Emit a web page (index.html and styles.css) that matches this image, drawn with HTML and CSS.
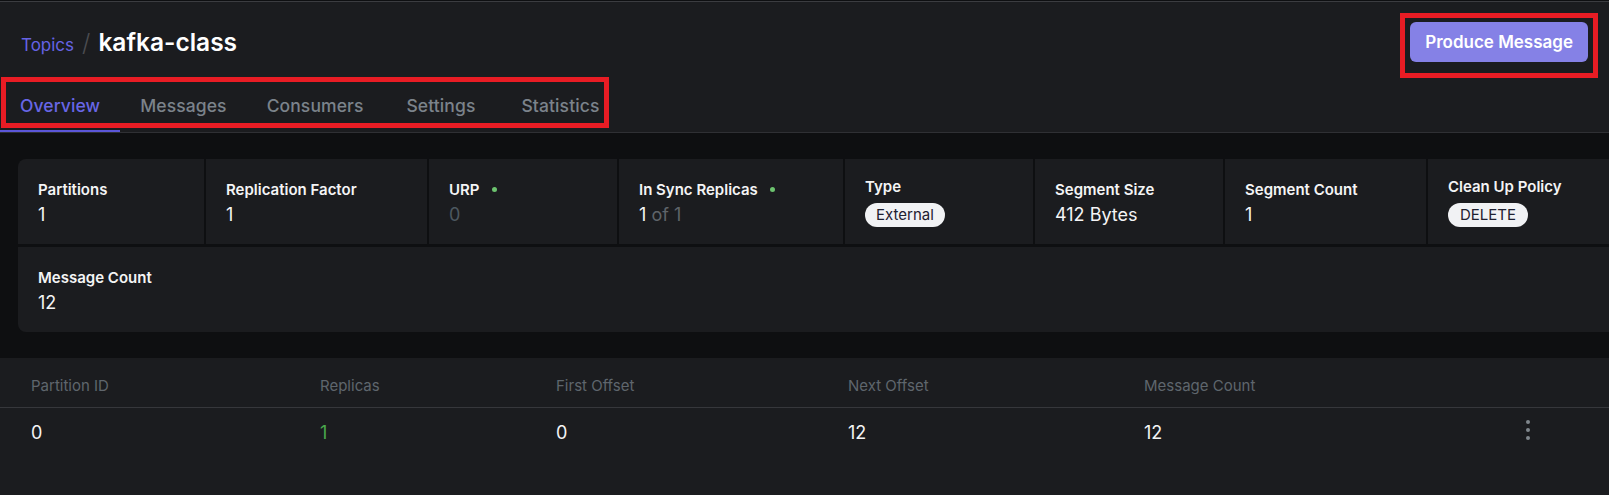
FILE: index.html
```html
<!DOCTYPE html>
<html lang="en">
<head>
<meta charset="utf-8">
<title>kafka-class · Topics</title>
<link rel="stylesheet" href="styles.css">
</head>
<body>
<div class="page">
  <header class="topbar">
    <div class="title-row">
      <nav class="crumbs">
        <a class="crumb-link">Topics</a>
        <span class="crumb-sep">/</span>
        <h1 class="crumb-title">kafka-class</h1>
      </nav>
      <button class="btn-primary">Produce Message</button>
    </div>
    <nav class="tabs">
      <a class="tab tab-active">Overview</a>
      <a class="tab">Messages</a>
      <a class="tab">Consumers</a>
      <a class="tab tab-settings">Settings</a>
      <a class="tab tab-statistics">Statistics</a>
    </nav>
  </header>

  <main class="content">
    <section class="stats">
      <div class="stats-row">
        <div class="stat w-partitions first">
          <div class="stat-label">Partitions</div>
          <div class="stat-value">1</div>
        </div>
        <div class="stat w-replication">
          <div class="stat-label">Replication Factor</div>
          <div class="stat-value">1</div>
        </div>
        <div class="stat w-urp">
          <div class="stat-label">URP <span class="dot"></span></div>
          <div class="stat-value muted">0</div>
        </div>
        <div class="stat w-isr">
          <div class="stat-label">In Sync Replicas <span class="dot"></span></div>
          <div class="stat-value">1 <span class="of">of 1</span></div>
        </div>
        <div class="stat stat-badge w-type">
          <div class="stat-label">Type</div>
          <span class="badge">External</span>
        </div>
        <div class="stat w-segsize">
          <div class="stat-label">Segment Size</div>
          <div class="stat-value">412 Bytes</div>
        </div>
        <div class="stat w-segcount">
          <div class="stat-label">Segment Count</div>
          <div class="stat-value">1</div>
        </div>
        <div class="stat stat-badge w-policy">
          <div class="stat-label">Clean Up Policy</div>
          <span class="badge badge-caps">DELETE</span>
        </div>
      </div>
      <div class="stats-row">
        <div class="stat stat-wide">
          <div class="stat-label">Message Count</div>
          <div class="stat-value">12</div>
        </div>
      </div>
    </section>
  </main>

  <section class="ptable">
    <div class="ptable-head">
      <div>Partition ID</div>
      <div>Replicas</div>
      <div>First Offset</div>
      <div>Next Offset</div>
      <div>Message Count</div>
      <div></div>
    </div>
    <div class="ptable-row">
      <div>0</div>
      <div class="green">1</div>
      <div>0</div>
      <div>12</div>
      <div>12</div>
      <div class="kebab">
        <svg width="4" height="20" viewBox="0 0 4 20"><circle cx="2" cy="2" r="2"/><circle cx="2" cy="10" r="2"/><circle cx="2" cy="18" r="2"/></svg>
      </div>
    </div>
  </section>

  <div class="annot annot-tabs"></div>
  <div class="annot annot-btn"></div>
</div>
</body>
</html>
```

FILE: styles.css
```css
html, body {
  margin: 0;
  padding: 0;
  background: #0e0f11;
  overflow: hidden;
  font-family: "Inter", "Liberation Sans", sans-serif;
  color: #f4f4f5;
}

.page {
  position: relative;
  display: flex;
  flex-direction: column;
  min-height: 100vh;
}

.topbar {
  background: #1b1c1f;
  margin-top: 1px;
  border-top: 1px solid #3b3c40;
  border-bottom: 1px solid #2f3034;
}

.title-row {
  display: flex;
  align-items: center;
  justify-content: space-between;
  height: 40px;
  padding: 20px 21px 0 21px;
}

.crumbs {
  display: flex;
  align-items: baseline;
}

.crumb-link {
  font-size: 17px;
  line-height: 24px;
  color: #6663e4;
}

.crumb-sep {
  font-size: 24px;
  font-weight: 300;
  line-height: 32px;
  color: #4b4c51;
  margin: 0 8px 0 8px;
}

.crumb-title {
  margin: 0;
  font-size: 24.5px;
  font-weight: 600;
  line-height: 32px;
  color: #ffffff;
}

.btn-primary {
  height: 40px;
  padding: 0 15px;
  border: none;
  border-radius: 6px;
  background: #8581e6;
  color: #ffffff;
  font-family: inherit;
  font-size: 17px;
  font-weight: 600;
}

.tabs {
  display: flex;
  margin-top: 20px;
}

.tab {
  padding: 12px 20px;
  font-size: 17.5px;
  font-weight: 500;
  letter-spacing: 0.1px;
  line-height: 24px;
  color: #7b838b;
  border-bottom: 2px solid transparent;
}

.tab-settings { margin-left: 3px; }
.tab-statistics { margin-left: 6px; }

.tab-active {
  color: #6866e6;
  border-bottom-color: #5b56d9;
}

.content {
  padding: 26px 0 26px 18px;
}

.stats {
  display: flex;
  flex-direction: column;
  gap: 3px;
  width: 1700px;
}

.stats-row {
  display: flex;
  gap: 2px;
}

.stat {
  flex: none;
  box-sizing: border-box;
  height: 85px;
  padding: 4px 20px 0 20px;
  background: #1b1c1f;
  display: flex;
  flex-direction: column;
  justify-content: center;
  gap: 1.5px;
}

.stat.first { border-top-left-radius: 8px; }

.stat-wide {
  flex: 1;
  border-bottom-left-radius: 8px;
}

.stat-badge {
  padding-top: 0;
  gap: 5px;
}

.w-partitions { width: 186px; }
.w-replication { width: 221px; }
.w-urp { width: 188px; }
.w-isr { width: 224px; }
.w-type { width: 188px; }
.w-segsize { width: 188px; }
.w-segcount { width: 201px; }
.w-policy { width: 260px; }

.stat-label {
  display: flex;
  align-items: center;
  font-size: 15px;
  font-weight: 600;
  line-height: 22px;
  color: #f4f4f5;
}

.stat-value {
  font-size: 18px;
  line-height: 26px;
  color: #f4f4f5;
}

.stat-value.muted { color: #4d5860; }
.stat-value .of { color: #5f6469; }

.dot {
  width: 5px;
  height: 5px;
  border-radius: 50%;
  background: #6cc26e;
  margin-left: 12px;
}

.badge {
  align-self: flex-start;
  height: 24px;
  line-height: 24px;
  padding: 0 11px;
  border-radius: 12px;
  background: #f1f2f4;
  color: #1e2030;
  font-size: 15px;
}

.badge-caps { padding: 0 12px; }

.ptable {
  flex: 1;
  background: #1b1c1f;
}

.ptable-head,
.ptable-row {
  display: grid;
  grid-template-columns: 289px 236px 292px 296px 366px 36px;
  padding-left: 31px;
}

.ptable-head {
  padding-top: 18px;
  padding-bottom: 11px;
  font-size: 15px;
  line-height: 20px;
  color: #5f666d;
  border-bottom: 1px solid #36373b;
}

.ptable-row {
  padding-top: 13px;
  padding-bottom: 11px;
  font-size: 18px;
  line-height: 24px;
  color: #f4f4f5;
}

.green { color: #4aa84d; }

.kebab {
  display: flex;
  align-items: center;
  justify-content: center;
}

.kebab svg {
  fill: #80878d;
  margin-top: -6px;
}

.annot {
  position: absolute;
  box-sizing: border-box;
  border: 5px solid #e81c24;
  pointer-events: none;
}

.annot-tabs {
  left: 1px;
  top: 77px;
  width: 608px;
  height: 51px;
}

.annot-btn {
  left: 1400px;
  top: 13px;
  width: 198px;
  height: 65px;
}
```
